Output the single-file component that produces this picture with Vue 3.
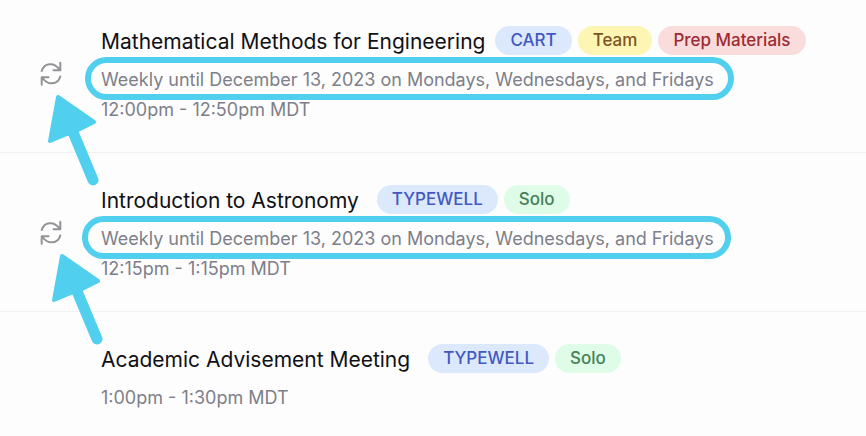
<script setup>
const meetings = [
  {
    title: 'Mathematical Methods for Engineering',
    recurrence: 'Weekly until December 13, 2023 on Mondays, Wednesdays, and Fridays',
    time: '12:00pm - 12:50pm MDT',
    mark: 'first',
    tags: [
      { label: 'CART', tone: 'blue' },
      { label: 'Team', tone: 'yellow' },
      { label: 'Prep Materials', tone: 'red' },
    ],
  },
  {
    title: 'Introduction to Astronomy',
    recurrence: 'Weekly until December 13, 2023 on Mondays, Wednesdays, and Fridays',
    time: '12:15pm - 1:15pm MDT',
    mark: 'second',
    tags: [
      { label: 'TYPEWELL', tone: 'blue' },
      { label: 'Solo', tone: 'green' },
    ],
  },
  {
    title: 'Academic Advisement Meeting',
    time: '1:00pm - 1:30pm MDT',
    mark: 'none',
    tags: [
      { label: 'TYPEWELL', tone: 'blue' },
      { label: 'Solo', tone: 'green' },
    ],
  },
]
</script>

<template>
  <ul class="meetings">
    <li v-for="meeting in meetings" :key="meeting.title" class="meeting" :class="meeting.mark">
      <div class="lead">
        <template v-if="meeting.recurrence">
          <svg class="repeat" viewBox="0 0 24 28" aria-hidden="true">
            <path d="M2.7 11C5 3.2 14.500 1.200 20.500 9.500M21.300 2.700V10.300H14.500" />
            <path d="M21.300 16.500C19 24.300 9.500 26.300 3.500 18M2.700 24.800V17.200H9.500" />
          </svg>
          <svg class="arrow" viewBox="0 0 60 100" aria-hidden="true">
            <path class="head" d="M12 10 48 35 30 44 27 46 21 47 4 54Z" />
            <path class="shaft" d="M24 38 47 93" />
          </svg>
        </template>
      </div>
      <div class="body">
        <div class="heading">
          <h2 class="title">{{ meeting.title }}</h2>
          <div class="tags">
            <span v-for="tag in meeting.tags" :key="tag.label" class="tag" :class="tag.tone">{{ tag.label }}</span>
          </div>
        </div>
        <p v-if="meeting.recurrence" class="detail recurrence">{{ meeting.recurrence }}</p>
        <p class="detail">{{ meeting.time }}</p>
      </div>
    </li>
  </ul>
</template>

<style>
body {
  background: #fdfdfd;
}
</style>

<style scoped>
.meetings {
  margin: 0;
  padding: 0;
  list-style: none;
  font-family: Inter, 'Liberation Sans', sans-serif;
}
.meeting {
  display: flex;
  padding: 31px 0 27px;
  border-bottom: 1px solid #f1f1f2;
}
.meeting:first-child {
  padding-top: 25px;
}
.meeting:last-child {
  border-bottom: 0;
  padding-bottom: 0;
}
.lead {
  position: relative;
  flex: 0 0 101px;
  padding: 35px 0 0 39px;
  box-sizing: border-box;
}
.repeat {
  display: block;
  width: 24px;
  height: 28px;
  fill: none;
  stroke: #929297;
  stroke-width: 2;
  stroke-linecap: round;
  stroke-linejoin: round;
}
.arrow {
  position: absolute;
  z-index: 1;
  top: 62px;
  left: 46px;
  width: 60px;
  height: 100px;
}
.second .arrow {
  left: 50px;
}
.head {
  fill: #50d0ee;
  stroke: #50d0ee;
  stroke-width: 4;
  stroke-linejoin: round;
}
.shaft {
  fill: none;
  stroke: #50d0ee;
  stroke-width: 11;
  stroke-linecap: round;
}
.body {
  flex: 1;
  min-width: 0;
}
.heading {
  display: flex;
  align-items: center;
  gap: 18px;
  margin-bottom: 6px;
}
.first .heading {
  gap: 10px;
}
.title {
  margin: 0;
  color: #101015;
  font-size: 21px;
  font-weight: 400;
  line-height: 34px;
  white-space: nowrap;
}
.tags {
  display: flex;
  gap: 6px;
  padding-bottom: 4px;
}
.tag {
  padding: 0 15px;
  border-radius: 15px;
  font-size: 17px;
  font-weight: 500;
  line-height: 29px;
  white-space: nowrap;
}
.blue {
  background: #dce9fd;
  color: #4358c2;
}
.yellow {
  background: #fcf5b4;
  color: #805323;
}
.red {
  background: #fbdcdd;
  color: #9d2b31;
}
.green {
  background: #defce7;
  color: #478058;
}
.detail {
  position: relative;
  width: fit-content;
  margin: 0;
  color: #7d7f89;
  font-size: 18px;
  line-height: 30px;
  white-space: nowrap;
}
.recurrence::after {
  content: '';
  position: absolute;
  inset: -8px -20px -5px -16px;
  border: 6px solid #50d0ee;
  border-radius: 22px;
}
.second .recurrence::after {
  right: -17px;
  left: -19px;
}
</style>
